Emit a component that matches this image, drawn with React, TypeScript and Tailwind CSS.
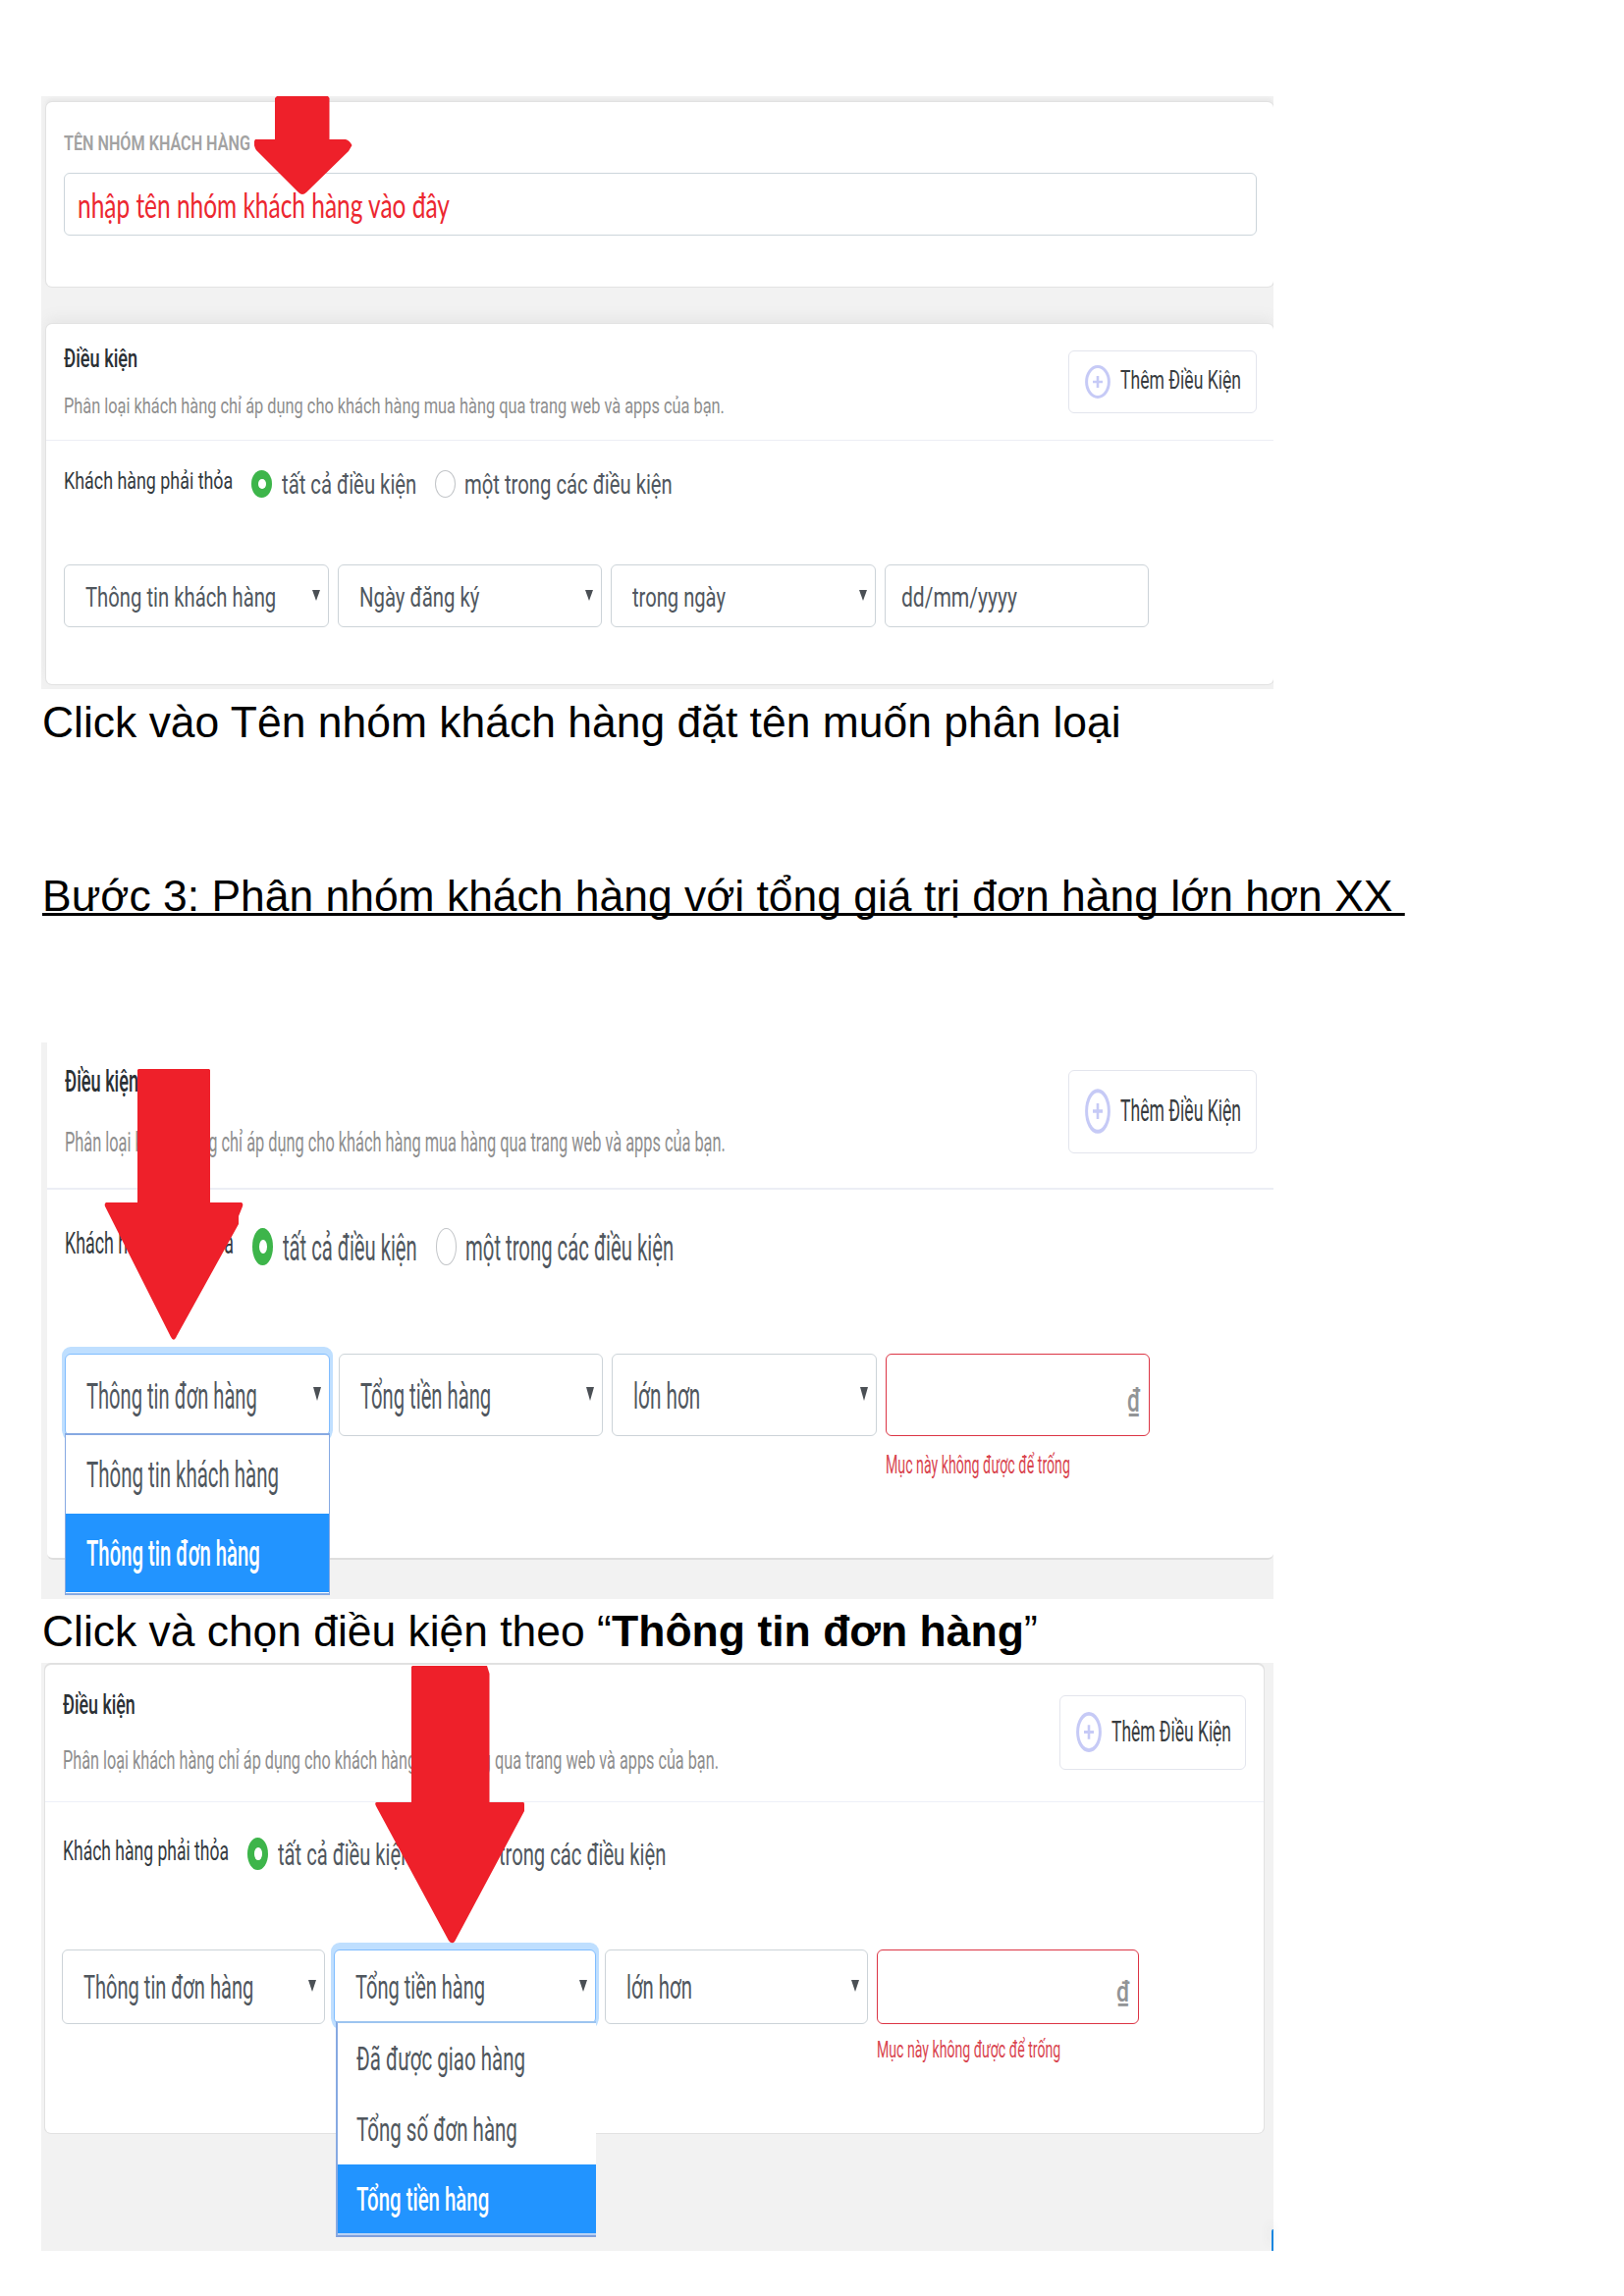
import { useLayoutEffect, useRef, useState, type ReactNode } from 'react'
import clsx from 'clsx'

/** Single line of text condensed or widened to fill the width of its box. */
function Fit({ children, className, textClass }: { children: ReactNode; className?: string; textClass?: string }) {
  const box = useRef<HTMLSpanElement>(null)
  const text = useRef<HTMLSpanElement>(null)
  const [scale, setScale] = useState(1)
  useLayoutEffect(() => {
    if (box.current && text.current) setScale(box.current.clientWidth / text.current.offsetWidth)
  }, [children])
  return (
    <span ref={box} className={clsx('block shrink-0', className)}>
      <span
        ref={text}
        className={clsx('inline-block origin-left whitespace-pre align-top', textClass)}
        style={{ transform: `scaleX(${scale})` }}
      >
        {children}
      </span>
    </span>
  )
}

function Caret({ className }: { className?: string }) {
  return (
    <svg viewBox="0 0 8 12" preserveAspectRatio="none" className={clsx('w-2 shrink-0 fill-[#4b5055]', className)}>
      <path d="M0 0H8L4 12Z" />
    </svg>
  )
}

function Select({
  label,
  textClass,
  caretClass,
  className,
  focused,
  children,
}: {
  label: string
  textClass: string
  caretClass: string
  className: string
  focused?: boolean
  children?: ReactNode
}) {
  return (
    <div
      className={clsx(
        'relative flex shrink-0 items-center justify-between rounded-md border bg-white pl-[21px] pr-[8px] text-[#50575e]',
        focused
          ? 'border-[#80bdff] shadow-[0_0_0_3px_#bfdfff,0_-4px_0_3px_#bfdfff,0_3px_0_2px_#bfdfff]'
          : 'border-[#ccd3d8]',
        className,
      )}
    >
      <Fit className={clsx('mt-[3px] leading-none', textClass)}>{label}</Fit>
      <Caret className={clsx('mb-[2px]', caretClass)} />
      {children}
    </div>
  )
}

function RadioOn({ className }: { className: string }) {
  return (
    <span className={clsx('flex w-[21px] shrink-0 items-center justify-center rounded-[50%] bg-[#3db54a]', className)}>
      <span className="h-[38%] w-2 rounded-[50%] bg-white" />
    </span>
  )
}

function RadioOff({ className }: { className: string }) {
  return <span className={clsx('w-[21px] shrink-0 rounded-[50%] border border-[#c2c5c8] bg-white', className)} />
}

function AddButton({ className, iconClass, textClass }: { className: string; iconClass: string; textClass: string }) {
  return (
    <div className={clsx('flex shrink-0 items-center rounded-md border border-[#e3e5ed] bg-white pl-4', className)}>
      <svg viewBox="0 0 26 34" preserveAspectRatio="none" className={clsx('mb-px shrink-0', iconClass)} fill="none" stroke="#c6caf6">
        <ellipse cx="13" cy="17" rx="11.4" ry="15.4" strokeWidth="3" />
        <path d="M13 11V23M8 17H18" strokeWidth="2.6" />
      </svg>
      <Fit className={clsx('mb-[3px] ml-[10px] leading-none text-[#383c40]', textClass)}>Thêm Điều Kiện</Fit>
    </div>
  )
}

function MoneyInput({ className, signClass }: { className: string; signClass: string }) {
  return (
    <div className={clsx('flex items-center justify-end rounded-md border border-[#dc3545] bg-white pr-[9px]', className)}>
      <Fit className={clsx('w-[13px] font-medium leading-none text-[#929496]', signClass)}>₫</Fit>
    </div>
  )
}

const DESCRIPTION = 'Phân loại khách hàng chỉ áp dụng cho khách hàng mua hàng qua trang web và apps của bạn.'

function GroupNamePanel() {
  const box = 'h-16 w-[269.6px]'
  const caret = 'h-[11px]'
  return (
    <section className="relative mt-[98px] h-[604px] w-[1255px] overflow-hidden bg-[#f2f2f2] pl-[5px] pt-[6px] font-['Roboto',sans-serif]">
      <div className="h-[188px] rounded-md bg-white pl-[18px] pr-[17px] pt-8 shadow-[0_0_0_1px_#e2e2e2,0_-3px_4px_#e6e6e6]">
        <Fit className="w-[190px] text-[21px] font-semibold leading-5 text-[#a2a2a2]">TÊN NHÓM KHÁCH HÀNG</Fit>
        <div className="mt-5 flex h-16 items-center rounded-md border border-[#ccd5db] pl-[13px]">
          <Fit className="mt-px w-[379px] font-['Lato','Noto_Sans',sans-serif] text-[34px] leading-none text-[#ec2730]">
            nhập tên nhóm khách hàng vào đây
          </Fit>
        </div>
      </div>
      <div className="mt-[38px] h-[367px] rounded-md bg-white shadow-[0_0_0_1px_#e2e2e2,0_-6px_14px_#e6e6e6]">
        <div className="flex h-[119px] items-start justify-between border-b border-[#eceef5] pl-[18px] pr-[17px]">
          <div className="pt-6 leading-none">
            <Fit className="w-[75px] text-[25px] font-medium leading-6 text-[#2b3035]">Điều kiện</Fit>
            <Fit className="mt-6 w-[673px] text-[22.5px] leading-[22px] text-[#8e8e8e]">{DESCRIPTION}</Fit>
          </div>
          <AddButton className="mt-[27px] h-16 w-[192px]" iconClass="h-[34px] w-[26px]" textClass="w-[123px] text-[25px]" />
        </div>
        <div className="mt-[30px] flex h-7 items-center pl-[18px]">
          <Fit className="mb-[6px] w-[172px] text-2xl leading-none text-[#343a40]">Khách hàng phải thỏa</Fit>
          <RadioOn className="ml-[19px] h-7" />
          <Fit className="ml-[10px] mt-px w-[137px] text-[28px] leading-none text-[#50575e]">tất cả điều kiện</Fit>
          <RadioOff className="ml-[19px] h-7" />
          <Fit className="ml-[9px] mt-px w-[212px] text-[28px] leading-none text-[#50575e]">một trong các điều kiện</Fit>
        </div>
        <div className="mt-[68px] flex gap-[9px] pl-[18px]">
          <Select label="Thông tin khách hàng" className={box} textClass="w-[194px] text-[28px]" caretClass={caret} />
          <Select label="Ngày đăng ký" className={box} textClass="w-[122px] text-[28px]" caretClass={caret} />
          <Select label="trong ngày" className={box} textClass="w-[95px] text-[28px]" caretClass={caret} />
          <div className="flex h-16 w-[269.6px] items-center rounded-md border border-[#ccd3d8] pl-4">
            <Fit className="mt-[3px] w-[118px] text-[28px] leading-none text-[#50575e]">dd/mm/yyyy</Fit>
          </div>
        </div>
      </div>
      <svg viewBox="0 0 100 101" className="absolute left-[217px] top-0 h-[101px] w-[100px] fill-[#ee202a]">
        <path d="M21 2L23 0H75L76.500 2V44H93Q97 45 99.500 50L96 56L53 98Q49 102 45 98L2 55Q-2 48 1 44H21Z" />
      </svg>
    </section>
  )
}

function OrderInfoPanel() {
  const box = 'h-[84px] w-[269.5px]'
  const caret = 'h-[14px]'
  return (
    <section className="relative mt-[125px] h-[567px] w-[1255px] bg-[#f2f2f2] pl-[6px] font-['Roboto',sans-serif]">
      <div className="h-[527px] rounded-b-md border-b-2 border-[#dedede] bg-white">
        <div className="flex h-[150px] items-start justify-between border-b-2 border-[#eceef5] pl-[18px] pr-[17px]">
          <div className="pt-[23px]">
            <Fit className="w-[75px] text-[32px] font-medium leading-none text-[#2b3035]">Điều kiện</Fit>
            <Fit className="mt-[33px] w-[673px] text-[28.5px] leading-7 text-[#8e8e8e]">{DESCRIPTION}</Fit>
          </div>
          <AddButton className="mt-[28px] h-[85px] w-[192px]" iconClass="h-[46px] w-[26px]" textClass="w-[123px] text-[32px]" />
        </div>
        <div className="mt-[39px] flex h-[38px] items-center pl-[18px]">
          <Fit className="mb-[7px] w-[172px] text-[31px] leading-none text-[#343a40]">Khách hàng phải thỏa</Fit>
          <RadioOn className="ml-[19px] h-[38px]" />
          <Fit className="ml-[10px] mt-[3px] w-[137px] text-[36px] leading-none text-[#50575e]">tất cả điều kiện</Fit>
          <RadioOff className="ml-[19px] h-[38px]" />
          <Fit className="ml-[9px] mt-[3px] w-[212px] text-[36px] leading-none text-[#50575e]">một trong các điều kiện</Fit>
        </div>
        <div className="mt-[90px] flex items-start gap-[9px] pl-[18px]">
          <Select label="Thông tin đơn hàng" focused className={box} textClass="w-[174px] text-[36px]" caretClass={caret}>
            <div className="absolute -left-px top-[80px] z-10 h-[165px] w-[270px] border-x border-b-2 border-t-2 border-[#86a9e2] bg-white pb-[2px] leading-none">
              <div className="flex h-[80px] items-center pl-[21px]">
                <Fit className="mt-[2px] w-[196px] text-[36px] leading-none text-[#50575e]">Thông tin khách hàng</Fit>
              </div>
              <div className="flex h-[80px] items-center bg-[#2294ff] pl-[21px]">
                <Fit className="mt-px w-[177px] text-[36px] font-medium leading-none text-white">Thông tin đơn hàng</Fit>
              </div>
            </div>
          </Select>
          <Select label="Tổng tiền hàng" className={box} textClass="w-[133px] text-[36px]" caretClass={caret} />
          <Select label="lớn hơn" className={box} textClass="w-[68px] text-[36px]" caretClass={caret} />
          <div>
            <MoneyInput className={box} signClass="mt-[10px] text-[33px]" />
            <Fit className="mt-[17px] w-[188px] text-[25px] leading-none text-[#d9454f]">Mục này không được để trống</Fit>
          </div>
        </div>
      </div>
      <svg viewBox="0 0 142 277" className="absolute left-[64px] top-[27px] h-[277px] w-[142px] fill-[#ee202a]">
        <path d="M34 1L35 0H107L108 1V136H140Q142 137 141 140L137 150V158L74 272Q71 279 68 273L1 140Q0 137 2 136H34Z" />
      </svg>
    </section>
  )
}

function TotalPanel() {
  const box = 'h-[76px] w-[267.5px]'
  const caret = 'h-[12px]'
  return (
    <section className="relative mt-[8px] h-[599px] w-[1255px] bg-[#f2f2f2] pl-[4px] pr-[10px] pt-[2px] font-['Roboto',sans-serif]">
      <div className="h-[477px] rounded-md bg-white shadow-[0_0_0_1px_#e2e2e2,0_-1px_0_1px_#e0e0e0]">
        <div className="flex h-[140px] items-start justify-between border-b border-[#edf0f8] pl-[18px] pr-[18px]">
          <div className="pt-[27px]">
            <Fit className="w-[74px] text-[28px] font-medium leading-none text-[#2b3035]">Điều kiện</Fit>
            <Fit className="mt-[29px] w-[668px] text-[26px] leading-none text-[#8e8e8e]">{DESCRIPTION}</Fit>
          </div>
          <AddButton className="mt-[31px] h-[76px] w-[190px]" iconClass="h-[41px] w-[26px]" textClass="w-[122px] text-[30px]" />
        </div>
        <div className="mt-[36px] flex h-[33px] items-center pl-[18px]">
          <Fit className="mb-[6px] w-[169px] text-[28px] leading-none text-[#343a40]">Khách hàng phải thỏa</Fit>
          <RadioOn className="ml-[19px] h-[33px]" />
          <Fit className="ml-[10px] mt-px w-[136px] text-[32px] leading-none text-[#50575e]">tất cả điều kiện</Fit>
          <RadioOff className="ml-[18px] h-[33px]" />
          <Fit className="ml-[9px] mt-px w-[211px] text-[32px] leading-none text-[#50575e]">một trong các điều kiện</Fit>
        </div>
        <div className="mt-[81px] flex items-start gap-[9px] pl-[17px]">
          <Select label="Thông tin đơn hàng" className={box} textClass="w-[173px] text-[32.5px]" caretClass={caret} />
          <Select label="Tổng tiền hàng" focused className={box} textClass="w-[132px] text-[32.5px]" caretClass={caret}>
            <div className="absolute left-px top-[72px] z-10 h-[220px] w-[265px] border-b-2 border-l-2 border-t-2 border-b-[#7f9fdc] border-l-[#86a9e2] border-t-[#9cc4f0] bg-white leading-none">
              <div className="flex h-[72px] items-center pl-[19px]">
                <Fit className="mt-[2px] w-[172px] text-[32.5px] leading-none text-[#50575e]">Đã được giao hàng</Fit>
              </div>
              <div className="flex h-[72px] items-center pl-[19px]">
                <Fit className="mt-[2px] w-[164px] text-[32.5px] leading-none text-[#50575e]">Tổng số đơn hàng</Fit>
              </div>
              <div className="flex h-[72px] items-center border-b-2 border-[#b9d2f5] bg-[#2294ff] pl-[19px]">
                <Fit className="mt-[3px] w-[135px] text-[32.5px] font-medium leading-none text-white">Tổng tiền hàng</Fit>
              </div>
            </div>
          </Select>
          <Select label="lớn hơn" className={box} textClass="w-[67px] text-[32.5px]" caretClass={caret} />
          <div>
            <MoneyInput className={box} signClass="mt-[9px] text-[30px]" />
            <Fit className="mt-[15px] w-[187px] text-[23px] leading-none text-[#d9454f]">Mục này không được để trống</Fit>
          </div>
        </div>
      </div>
      <svg viewBox="0 0 153 283" className="absolute left-[340px] top-[3px] h-[283px] w-[153px] fill-[#ee202a]">
        <path d="M37 1L38 0H114L116.500 8V139H151Q152 139 152 141V148L81 281Q78 284 75 280L1 143Q-1 139 2 139H37Z" />
      </svg>
      <div className="absolute bottom-0 right-0 h-[22px] w-[2px] rounded-tl-full bg-[#1b87e0] shadow-[-2px_-6px_10px_#dcdcdc]" />
    </section>
  )
}

export default function App() {
  return (
    <main className="flex h-[2339px] w-[1654px] flex-col overflow-hidden bg-white pl-[42px] font-['Liberation_Sans',sans-serif] text-[44px] leading-[48px] text-black">
      <GroupNamePanel />
      <Fit className="ml-px mt-[10px] w-[1099px]">Click vào Tên nhóm khách hàng đặt tên muốn phân loại</Fit>
      <Fit
        className="ml-px mt-[129px] w-[1388px]"
        textClass="underline decoration-[2.5px] underline-offset-[2px] [text-decoration-skip-ink:none]"
      >
        {'Bước 3: Phân nhóm khách hàng với tổng giá trị đơn hàng lớn hơn XX '}
      </Fit>
      <OrderInfoPanel />
      <div className="ml-px mt-[9px] flex">
        <Fit className="w-[580px]">Click và chọn điều kiện theo “</Fit>
        <Fit className="w-[420px] font-bold">Thông tin đơn hàng</Fit>
        <Fit className="w-[14px]">”</Fit>
      </div>
      <TotalPanel />
    </main>
  )
}
